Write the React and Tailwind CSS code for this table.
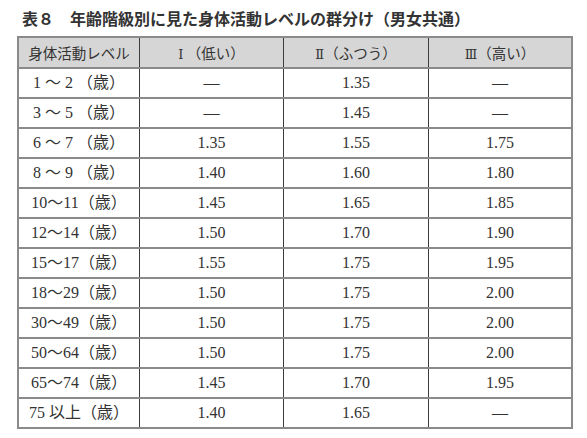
import React from "react";

const rows = [
  ["1 ～ 2 （歳）", "—", "1.35", "—"],
  ["3 ～ 5 （歳）", "—", "1.45", "—"],
  ["6 ～ 7 （歳）", "1.35", "1.55", "1.75"],
  ["8 ～ 9 （歳）", "1.40", "1.60", "1.80"],
  ["10～11（歳）", "1.45", "1.65", "1.85"],
  ["12～14（歳）", "1.50", "1.70", "1.90"],
  ["15～17（歳）", "1.55", "1.75", "1.95"],
  ["18～29（歳）", "1.50", "1.75", "2.00"],
  ["30～49（歳）", "1.50", "1.75", "2.00"],
  ["50～64（歳）", "1.50", "1.75", "2.00"],
  ["65～74（歳）", "1.45", "1.70", "1.95"],
  ["75 以上（歳）", "1.40", "1.65", "—"],
];

const serif = "font-['Liberation_Serif','Noto_Sans_CJK_JP',serif]";
const sans = "font-['Noto_Sans_CJK_JP',sans-serif]";
const roman = "font-['DejaVu_Serif','Liberation_Serif',serif] text-[13px]";

export default function App() {
  return (
    <div className="w-[587px] h-[438px] bg-white pt-[7px]">
      <h1 className={`${sans} pl-[22px] text-[16px] leading-[22px] font-bold text-[#333]`}>
        表８　年齢階級別に見た身体活動レベルの群分け（男女共通）
      </h1>
      <div className="ml-[17px] mt-[7px] w-[556px] border-2 border-[#8a8a8a] text-[#333]">
        <div className={`${sans} flex h-[29px] bg-[#d6d6d6] text-[14.5px] leading-[29px]`}>
          <div className="w-[120px] text-center">身体活動レベル</div>
          <div className="w-[144px] border-l border-[#3c3c3c] text-center">
            <span className={roman}>Ⅰ</span> （低い）
          </div>
          <div className="w-[145px] border-l border-[#3c3c3c] text-center">
            <span className={roman}>Ⅱ</span>（ふつう）
          </div>
          <div className="flex-1 border-l border-[#3c3c3c] text-center">
            <span className={roman}>Ⅲ</span>（高い）
          </div>
        </div>
        {rows.map((r, i) => (
          <div key={i} className={`${serif} flex h-[30px] border-t-2 border-[#8a8a8a] text-[16px] leading-[28px]`}>
            <div className="w-[120px] text-center">{r[0]}</div>
            <div className="w-[144px] border-l border-[#3c3c3c] text-center">{r[1]}</div>
            <div className="w-[145px] border-l border-[#3c3c3c] text-center">{r[2]}</div>
            <div className="flex-1 border-l border-[#3c3c3c] text-center">{r[3]}</div>
          </div>
        ))}
      </div>
    </div>
  );
}
